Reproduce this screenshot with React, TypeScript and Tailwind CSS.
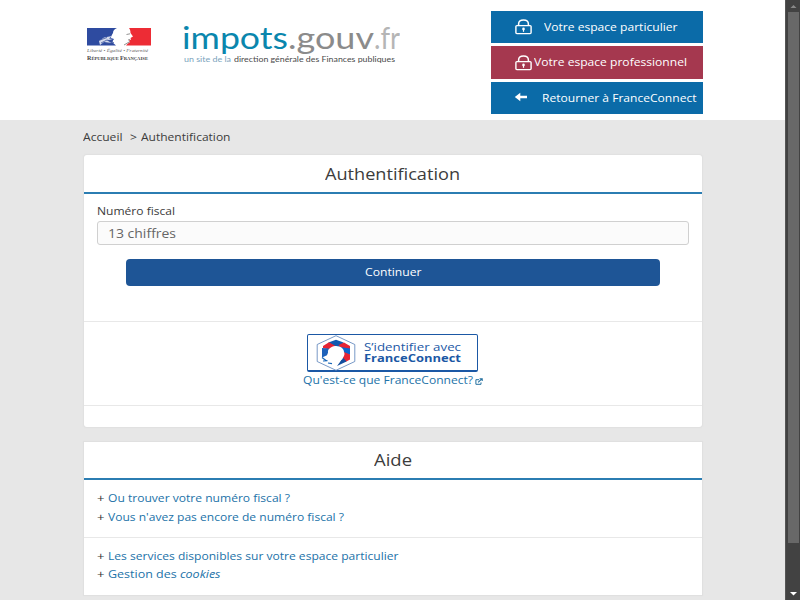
import { useLayoutEffect, useRef, useState, type ReactNode } from "react";

/* One line of text, widened or narrowed to the width w. */
function Fit({ w, className = "", children }: { w: number; className?: string; children: ReactNode }) {
  const ref = useRef<HTMLSpanElement>(null);
  const [scale, setScale] = useState(1);
  useLayoutEffect(() => {
    if (ref.current) setScale(w / ref.current.getBoundingClientRect().width);
  }, [w]);
  return (
    <span className={`inline-block shrink-0 whitespace-nowrap ${className}`} style={{ width: w }}>
      <span ref={ref} className="inline-block origin-left" style={{ transform: `scaleX(${scale})` }}>
        {children}
      </span>
    </span>
  );
}

function Marianne() {
  return (
    <svg width="64" height="18" viewBox="0 0 64 18" className="block">
      <rect width="64" height="18" fill="#fff" />
      <path d="M0 0H30C27 1 26 3 26 5C25 7 24 8 24 10L27 11L25 14L29 17.5H0Z" fill="#2e4ba0" />
      <path d="M42 0H64V17.5H39C40 16 42 15 43 14L42 12.5L44 11.5L43.5 10L46 8.5L43.5 5C43.5 3 43 1 42 0Z" fill="#ed2c35" />
      <path d="M12 13L17 9.5L25 8L22 10.5L26 11L20 12.5L25 15L17 14L13 17Z" fill="#fff" opacity=".8" />
      <path d="M13 12L20 9.5M14 15L20 12L26 13.5M19 16L27 14.5" stroke="#3f579f" strokeWidth=".8" fill="none" />
      <path d="M39.5 6.5L43 5.8M41 12L43 11.5M37 17L43 13.5" stroke="#777" strokeWidth=".8" />
    </svg>
  );
}

function Lock() {
  return (
    <svg width="17" height="16" viewBox="0 0 17 16" className="block shrink-0" fill="none" stroke="#fff">
      <rect x=".9" y="6.6" width="15.2" height="8" rx="1" strokeWidth="1.4" />
      <path d="M3.6 6.4V5C3.6 2.5 5.7 1 8.5 1S13.4 2.5 13.4 5V6.4" strokeWidth="1.5" />
      <circle cx="8.5" cy="9.9" r="1.3" fill="#fff" stroke="none" />
      <path d="M8.5 10V12.8" strokeWidth="1.2" />
    </svg>
  );
}

function FranceConnectMark() {
  return (
    <svg width="40" height="36" viewBox="0 0 40 36" className="block shrink-0">
      <path d="M20 .7L38.8 9.5V26.5L20 35.3L1.2 26.5V9.5Z" fill="#fff" stroke="#557fb9" strokeWidth=".8" />
      <path d="M12.5 7.5L20 4.8L27.5 7.5L25 13H14Z" fill="#1259b0" />
      <path d="M13 7.3L19.5 11L15 15L7 13V11Z" fill="#e52435" />
      <path d="M6 13L13 13.5L11.5 20L6 22.5Z" fill="#1d62bb" />
      <path d="M28 7.5L34 11V14L26 14L22.5 10Z" fill="#e52435" />
      <path d="M24.5 12L34 13.5V20L28 18Z" fill="#0a66cf" />
      <path d="M28 17L34 19.5V24.5L29.5 27L26 22Z" fill="#e52435" />
      <path d="M26.5 22L30.5 26.5L21 31L24 27Z" fill="#144f9f" />
      <path d="M12 18C11.5 14 15 11.5 19 11C24 10.5 28 13.5 28 17C29.5 20 27 22 26.5 24L23 27L20.5 31L14 28L14 24L10 23Z" fill="#fff" />
      <path d="M6 22.5L10 25.5M7 26L11.5 25.7M12 28L16 28.6" stroke="#1666b9" strokeWidth="1.2" fill="none" />
    </svg>
  );
}

function External() {
  return (
    <svg width="8" height="7" viewBox="0 0 8 7" className="block" fill="none" stroke="#24709f">
      <path d="M4 1.7H.9V6.3H6V4.4" strokeWidth="1" />
      <path d="M3.1 4.3L6.6 1.2M4.6.7H7.2V3.1" strokeWidth="1.1" />
    </svg>
  );
}

function HelpLink({ w, children }: { w: number; children: ReactNode }) {
  return (
    <li className="flex h-[18.5px] items-center">
      <Fit w={7.5} className="mr-[4px] text-[#333]">+</Fit>
      <Fit w={w} className="text-[#2272a8]">{children}</Fit>
    </li>
  );
}

export default function App() {
  return (
    <div className="flex h-[600px] w-[800px] overflow-hidden bg-[#e7e7e7] font-['Open_Sans','Noto_Sans',sans-serif] text-[11px] leading-[16px] text-[#3c3c3c]">
      <div className="h-[600px] w-[785px] shrink-0 overflow-hidden">
        <header className="flex h-[120px] bg-white">
          <div className="ml-[87px] mt-[28px] w-[64px]">
            <Marianne />
            <div className="mt-[2px] flex h-[6px] items-center font-['Liberation_Serif',serif] text-[5px] leading-[6px] italic text-[#666]">
              <Fit w={61}>Liberté • Égalité • Fraternité</Fit>
            </div>
            <div className="flex h-[7px] items-center font-['Liberation_Serif',serif] text-[5px] leading-[7px] font-bold text-[#444]">
              <Fit w={61}><span className="text-[6.5px]">R</span>ÉPUBLIQUE <span className="text-[6.5px]">F</span>RANÇAISE</Fit>
            </div>
          </div>
          <div className="ml-[31px] mt-[20px] w-[219px] font-[Lato,sans-serif]">
            <div className="flex h-[34px] items-center text-[30.5px] leading-[34px]">
              <Fit w={106} className="text-[#0a86ad]">impots</Fit>
              <Fit w={86} className="text-[#8b8b8b]">.gouv</Fit>
              <Fit w={26} className="text-[#b5b5b5]">.fr</Fit>
            </div>
            <div className="ml-[2px] mt-[1px] flex h-[10px] items-center gap-[3px] text-[7.5px] leading-[10px]">
              <Fit w={47} className="text-[#7ba3bd]">un site de la</Fit>
              <Fit w={161} className="text-[#4a4a4a]">direction générale des Finances publiques</Fit>
            </div>
          </div>
          <nav className="ml-[90px] mt-[11px] flex w-[212px] flex-col gap-[3px] text-white">
            <a className="flex h-[32.4px] items-center bg-[#0b6ba8] pl-[24px]">
              <Lock />
              <Fit w={133.5} className="ml-[12px]">Votre espace particulier</Fit>
            </a>
            <a className="flex h-[32.4px] items-center bg-[#a5384f] pl-[24px]">
              <Lock />
              <Fit w={153} className="ml-[2px] -mt-px">Votre espace professionnel</Fit>
            </a>
            <a className="flex h-[32.4px] items-center bg-[#0b6ba8] pl-[23px]">
              <svg width="14" height="10" viewBox="0 0 14 10" className="-mt-px block shrink-0">
                <path d="M.8 5L6.3.7V3.7H13V6.3H6.3V9.3Z" fill="#fff" />
              </svg>
              <Fit w={154.5} className="ml-[13.5px]">Retourner à FranceConnect</Fit>
            </a>
          </nav>
        </header>

        <main className="ml-[83.5px] w-[618.5px]">
          <div className="-ml-[0.5px] flex h-[35px] items-center pb-[2px]">
            <Fit w={39.5}>Accueil</Fit>
            <Fit w={7} className="ml-[7px]">&gt;</Fit>
            <Fit w={89.5} className="ml-[4px]">Authentification</Fit>
          </div>

          <section className="h-[272px] rounded-[3px] bg-white shadow-[0_0_1px_1px_#e0e0e0]">
            <h1 className="flex h-[38.5px] items-center justify-center border-b-2 border-[#2b7db2] pt-[1px] text-[16px] leading-[22px]">
              <Fit w={135}>Authentification</Fit>
            </h1>
            <div className="h-[128.5px] border-b border-[#e8e8e8] px-[13px] pt-[9.5px]">
              <label className="flex h-[16px] items-center"><Fit w={78}>Numéro fiscal</Fit></label>
              <div className="mt-[2px] flex h-[24px] w-[592px] items-center rounded-[3px] border border-[#d0d0d0] bg-[#fbfbfb] pt-[1px] pl-[10px] text-[12px] text-[#666]">
                <Fit w={68}>13 chiffres</Fit>
              </div>
              <button className="mt-[14px] ml-[29px] flex h-[27px] w-[534px] items-center justify-center rounded-[4px] bg-[#1e5596] pr-[3px] pb-px text-white">
                <Fit w={56.5}>Continuer</Fit>
              </button>
            </div>
            <div className="flex h-[84px] flex-col items-center border-b border-[#e8e8e8] pt-[12px]">
              <a className="flex h-[38px] w-[171px] items-center rounded-[2px] border border-b-2 border-[#1b58a5] bg-white pl-[8px]">
                <FranceConnectMark />
                <span className="ml-[8px] flex flex-col text-[10.5px] leading-[11px] text-[#1b58a5]">
                  <Fit w={97} className="h-[11px]">S’identifier avec</Fit>
                  <Fit w={97} className="h-[11px] font-bold">FranceConnect</Fit>
                </span>
              </a>
              <a className="flex h-[16px] items-center gap-[2.5px] text-[#2272a8]">
                <Fit w={170}>Qu'est-ce que FranceConnect?</Fit>
                <span className="pt-[3px]"><External /></span>
              </a>
            </div>
          </section>

          <section className="mt-[15px] h-[153px] bg-white shadow-[0_0_1px_1px_#e0e0e0]">
            <h2 className="flex h-[38px] items-center justify-center border-b-2 border-[#2b7db2] text-[16px] leading-[22px]">
              <Fit w={38}>Aide</Fit>
            </h2>
            <ul className="h-[58px] border-b border-[#e8e8e8] pt-[9px] pl-[13px]">
              <HelpLink w={182}>Ou trouver votre numéro fiscal ?</HelpLink>
              <HelpLink w={236}>Vous n'avez pas encore de numéro fiscal ?</HelpLink>
            </ul>
            <ul className="pt-[8.5px] pl-[13px]">
              <HelpLink w={290.5}>Les services disponibles sur votre espace particulier</HelpLink>
              <HelpLink w={112.5}>Gestion des <em>cookies</em></HelpLink>
            </ul>
          </section>
        </main>
      </div>

      <div className="flex h-[600px] w-[15px] flex-col items-center border-l border-[#555] bg-[#424242]">
        <svg width="7" height="12" viewBox="0 0 7 12" className="block"><path d="M.5 8L3.5 5L6.5 8Z" fill="#888" /></svg>
        <div className="h-[531px] w-[11px] bg-[#686868]" />
        <svg width="7" height="57" viewBox="0 0 7 57" className="block"><path d="M0 49H7L3.5 52.5Z" fill="#fff" /></svg>
      </div>
    </div>
  );
}
